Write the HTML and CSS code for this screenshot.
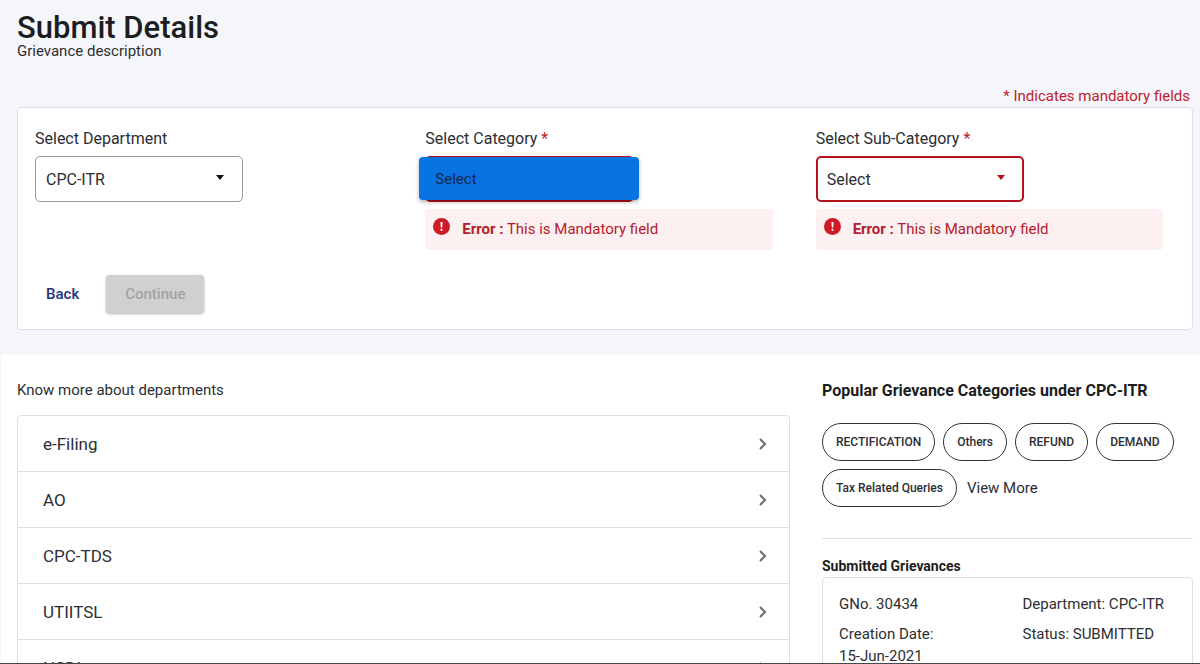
FILE: index.html
```html
<!DOCTYPE html>
<html lang="en">
<head>
    <meta charset="UTF-8">
    <meta name="viewport" content="width=device-width, initial-scale=1.0">
    <title>Submit Details</title>
    <link rel="stylesheet" href="styles.css">
</head>
<body>

    <main class="page">
        <section class="submit">
            <h1>Submit Details</h1>
            <p class="subtitle">Grievance description</p>
            <p class="mandatory">* Indicates mandatory fields</p>

            <form class="card">
                <div class="fields">
                    <div class="field">
                        <label for="department">Select Department</label>
                        <div class="select-box">
                            <select id="department">
                                <option>CPC-ITR</option>
                            </select>
                        </div>
                    </div>

                    <div class="field invalid">
                        <label for="category">Select Category <span class="star">*</span></label>
                        <div class="select-box">
                            <select id="category">
                                <option>Select</option>
                            </select>
                            <!-- open option panel -->
                            <div class="panel">
                                <button type="button" class="option">Select</button>
                            </div>
                        </div>
                        <div class="error">
                            <svg class="error-icon" viewBox="0 0 17 17">
                                <circle cx="8.5" cy="8.5" r="8.5" fill="#cc1b27"/>
                                <path d="M7.4 4h2.2l-.4 5.6H7.8z" fill="#fff"/>
                                <circle cx="8.5" cy="11.8" r="1.1" fill="#fff"/>
                            </svg>
                            <p><b>Error :</b> This is Mandatory field</p>
                        </div>
                    </div>

                    <div class="field invalid">
                        <label for="subcategory">Select Sub-Category <span class="star">*</span></label>
                        <div class="select-box">
                            <select id="subcategory">
                                <option>Select</option>
                            </select>
                        </div>
                        <div class="error">
                            <svg class="error-icon" viewBox="0 0 17 17">
                                <circle cx="8.5" cy="8.5" r="8.5" fill="#cc1b27"/>
                                <path d="M7.4 4h2.2l-.4 5.6H7.8z" fill="#fff"/>
                                <circle cx="8.5" cy="11.8" r="1.1" fill="#fff"/>
                            </svg>
                            <p><b>Error :</b> This is Mandatory field</p>
                        </div>
                    </div>
                </div>

                <div class="actions">
                    <button type="button" class="back">Back</button>
                    <button type="submit" class="continue" disabled>Continue</button>
                </div>
            </form>
        </section>

        <section class="info">
            <div class="departments">
                <h2>Know more about departments</h2>
                <div class="list">
                    <a href="#efiling">e-Filing <svg viewBox="0 0 8 12"><path d="M1 1l5 5-5 5"/></svg></a>
                    <a href="#ao">AO <svg viewBox="0 0 8 12"><path d="M1 1l5 5-5 5"/></svg></a>
                    <a href="#cpctds">CPC-TDS <svg viewBox="0 0 8 12"><path d="M1 1l5 5-5 5"/></svg></a>
                    <a href="#utiitsl">UTIITSL <svg viewBox="0 0 8 12"><path d="M1 1l5 5-5 5"/></svg></a>
                    <a href="#nsdl">NSDL <svg viewBox="0 0 8 12"><path d="M1 1l5 5-5 5"/></svg></a>
                </div>
            </div>

            <aside class="sidebar">
                <h2>Popular Grievance Categories under CPC-ITR</h2>
                <div class="chips">
                    <button type="button" class="chip">RECTIFICATION</button>
                    <button type="button" class="chip">Others</button>
                    <button type="button" class="chip">REFUND</button>
                    <button type="button" class="chip">DEMAND</button>
                    <button type="button" class="chip">Tax Related Queries</button>
                    <a href="#more" class="more">View More</a>
                </div>

                <h3>Submitted Grievances</h3>
                <div class="grievance">
                    <p>GNo. 30434</p>
                    <p>Department: CPC-ITR</p>
                    <p>Creation Date:<br>15-Jun-2021</p>
                    <p>Status: SUBMITTED</p>
                </div>
            </aside>
        </section>
    </main>
    <div class="bottom-edge"></div>

</body>
</html>
```
FILE: styles.css
```css
* {
    box-sizing: border-box;
}
body {
    font-family: Roboto, Arial, sans-serif;
    font-size: 15px;
    line-height: 22px;
    color: #2c2e33;
    background: #f5f6fa;
    margin: 0;
    height: 100vh;
    display: flex;
    flex-direction: column;
    overflow: hidden;
}
h1, h2, h3, p {
    margin: 0;
}
button, select {
    font-family: inherit;
}
a {
    color: inherit;
    text-decoration: none;
}
.page {
    flex: 1;
    min-height: 0;
    overflow: hidden;
}
.bottom-edge {
    height: 1px;
    background: #45484f;
}

/* form */
.submit {
    padding: 12px 7px 25px 17px;
}
h1 {
    font-size: 31px;
    font-weight: 500;
    line-height: 32px;
    color: #1c1d21;
}
.subtitle {
    line-height: 14px;
}
.mandatory {
    color: #c0202e;
    text-align: right;
    margin: 27px 3px 0 0;
}
.card {
    background: white;
    border: 1px solid #dcdfe8;
    border-radius: 4px;
    padding: 18px 29px 16px 17px;
}
.fields {
    display: grid;
    grid-template-columns: repeat(3, 1fr);
    gap: 43px;
}
.field label {
    display: block;
    font-size: 16px;
    line-height: 25px;
    margin-bottom: 5px;
}
.star {
    color: #c0202e;
}
.select-box {
    position: relative;
    width: 60%;
}
.select-box select {
    display: block;
    appearance: none;
    width: 100%;
    height: 46px;
    padding: 0 10px;
    border: 1px solid #9b9b9b;
    border-radius: 5px;
    background: white;
    color: #2c2e33;
    font-size: 16px;
}
.select-box::after {
    content: "";
    position: absolute;
    top: 19px;
    right: 19px;
    border: 4px solid transparent;
    border-top: 5px solid #111;
    border-bottom: 0;
}
.invalid .select-box select {
    border: 2px solid #b5121b;
    padding: 0 9px;
}
.invalid .select-box::after {
    border-top-color: #b5121b;
}
.panel {
    position: absolute;
    z-index: 1;
    top: 1px;
    left: -6px;
    right: -5px;
    border-radius: 4px;
    background: #0a73e2;
    box-shadow: 0 2px 4px rgba(0, 0, 0, 0.3);
}
.option {
    display: block;
    width: 100%;
    height: 43px;
    padding: 0 16px;
    border: none;
    background: none;
    color: #15264a;
    font-size: 15px;
    text-align: left;
}
.error {
    display: flex;
    gap: 12px;
    margin-top: 7px;
    padding: 9px 8px 10px;
    border-radius: 4px;
    background: #fdf0f1;
    color: #b3202c;
}
.error b {
    font-weight: 700;
}
.error-icon {
    width: 17px;
    height: 17px;
}
.actions {
    display: flex;
    gap: 27px;
    margin-top: 25px;
    padding-left: 11px;
}
.actions button {
    height: 38px;
    border: none;
    border-radius: 4px;
    font-size: 15px;
    font-weight: 500;
}
.actions .back {
    padding: 0;
    background: none;
    color: #25307f;
}
.actions .continue {
    padding: 0 19px;
    background: #d0d0d0;
    color: #a3a3a3;
    box-shadow: 0 1px 3px rgba(0, 0, 0, 0.3);
}

/* departments and grievances */
.info {
    display: grid;
    grid-template-columns: 25fr 12fr;
    gap: 32px;
    margin-left: 1px;
    padding: 24px 7px 24px 16px;
    background: white;
}
.info h2 {
    font-size: 15px;
    font-weight: 400;
    line-height: 23px;
}
.list {
    margin-top: 13px;
    border: 1px solid #dcdfe8;
    border-radius: 4px;
}
.list a {
    display: flex;
    justify-content: space-between;
    align-items: center;
    height: 56px;
    padding: 0 22px 0 25px;
    border-bottom: 1px solid #dcdfe8;
    font-size: 17px;
}
.list a:last-child {
    border-bottom: none;
}
.list svg {
    width: 8px;
    height: 12px;
    fill: none;
    stroke: #6b6b6b;
    stroke-width: 2;
}
.sidebar h2 {
    font-size: 16px;
    font-weight: 700;
    color: #1c1d21;
}
.chips {
    display: flex;
    flex-wrap: wrap;
    align-items: center;
    gap: 8px;
    margin-top: 21px;
    padding-bottom: 31px;
    border-bottom: 1px solid #dcdfe8;
}
.chip {
    height: 38px;
    padding: 0 13px;
    border: 1px solid #333;
    border-radius: 19px;
    background: white;
    color: #2c2e33;
    font-size: 12px;
    font-weight: 500;
}
.more {
    margin-left: 2px;
}
.sidebar h3 {
    margin-top: 16px;
    font-size: 14px;
    font-weight: 700;
    color: #1c1d21;
}
.grievance {
    display: grid;
    grid-template-columns: 1fr 1fr;
    gap: 8px 30px;
    padding: 15px 16px;
    border: 1px solid #dcdfe8;
    border-radius: 4px;
}
```
